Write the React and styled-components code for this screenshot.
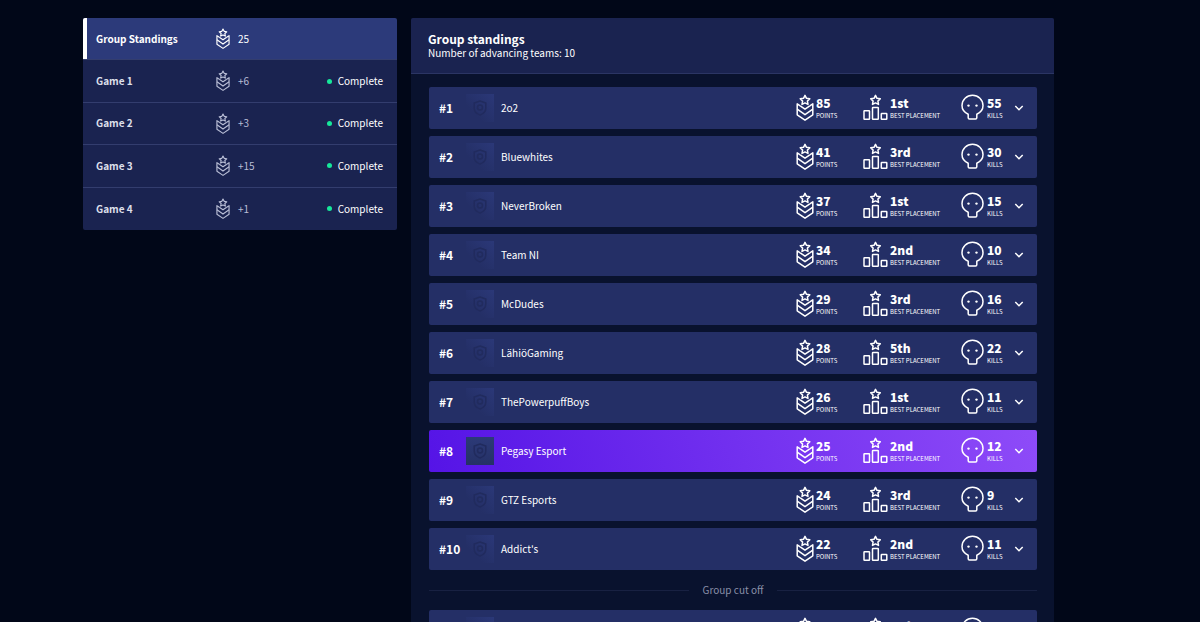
import React, { useState } from "react";
import styled, { createGlobalStyle, css } from "styled-components";

const games = [
  { name: "Group Standings", points: "25" },
  { name: "Game 1", points: "+6", status: "Complete" },
  { name: "Game 2", points: "+3", status: "Complete" },
  { name: "Game 3", points: "+15", status: "Complete" },
  { name: "Game 4", points: "+1", status: "Complete" },
];

const advancing = [
  { rank: 1, name: "2o2", points: 85, best: "1st", kills: 55 },
  { rank: 2, name: "Bluewhites", points: 41, best: "3rd", kills: 30 },
  { rank: 3, name: "NeverBroken", points: 37, best: "1st", kills: 15 },
  { rank: 4, name: "Team NI", points: 34, best: "2nd", kills: 10 },
  { rank: 5, name: "McDudes", points: 29, best: "3rd", kills: 16 },
  { rank: 6, name: "LähiöGaming", points: 28, best: "5th", kills: 22 },
  { rank: 7, name: "ThePowerpuffBoys", points: 26, best: "1st", kills: 11 },
  { rank: 8, name: "Pegasy Esport", points: 25, best: "2nd", kills: 12, own: true },
  { rank: 9, name: "GTZ Esports", points: 24, best: "3rd", kills: 9 },
  { rank: 10, name: "Addict's", points: 22, best: "2nd", kills: 11 },
];

const eliminated = [
  { rank: 11, name: "Nordavind", points: 18, best: "3rd", kills: 9 },
];

const RankIcon = ({ size }) => (
  <Icon viewBox="0 0 18 28" $width={size === "small" ? 14 : 18} aria-hidden="true">
    <path d="M9 1.3l1.5 3 3.3.5-2.4 2.3.6 3.3L9 8.900l-3 1.500.6-3.300-2.400-2.300 3.300-.5z" />
    <path d="M4.200 11.800L1.200 9.800v11L9 26.200l7.800-5.400v-11l-3 2" />
    <path d="M4.200 11.800L9 15.200l4.800-3.400M1.200 15.200L9 20.700l7.800-5.500" />
  </Icon>
);

const PodiumIcon = () => (
  <Icon viewBox="0 0 25 28" $width={25} aria-hidden="true">
    <path d="M12.500 1.300l1.500 3 3.300.5-2.400 2.300.6 3.300-3-1.500-3 1.500.6-3.300-2.400-2.300 3.300-.5z" />
    <rect x="1" y="16.800" width="5.500" height="8.400" rx=".5" />
    <rect x="9.500" y="13.500" width="5.800" height="11.700" rx=".5" />
    <rect x="18.300" y="19.500" width="5.500" height="5.700" rx=".5" />
  </Icon>
);

const SkullIcon = () => (
  <Icon viewBox="0 0 24 28" $width={24} aria-hidden="true">
    <path d="M7.200 20.200C3.400 18.600 1 15.400 1 11.600a10.500 10.300 0 0 1 21 0c0 3.800-2.400 7-6.200 8.600v3.600q0 1.200-1.200 1.200H8.400q-1.200 0-1.200-1.200z" />
    <circle cx="7.500" cy="11.600" r="1.200" fill="currentColor" stroke="none" />
    <circle cx="15.500" cy="11.600" r="1.200" fill="currentColor" stroke="none" />
  </Icon>
);

const TeamBadge = ({ own }) => (
  <Badge $own={own}>
    <svg width="16" height="16" viewBox="0 0 16 16" aria-hidden="true">
      <path d="M8 1l5.800 2v5c0 3.500-2.500 5.800-5.800 7-3.300-1.200-5.800-3.500-5.800-7V3z" />
      <circle cx="8" cy="7.500" r="2.500" />
    </svg>
  </Badge>
);

const TeamRow = ({ team }) => (
  <Row $own={team.own}>
    <Rank>#{team.rank}</Rank>
    <TeamBadge own={team.own} />
    <TeamName>{team.name}</TeamName>
    <Stat $width={67}>
      <RankIcon />
      <StatText>
        <strong>{team.points}</strong>
        <span>POINTS</span>
      </StatText>
    </Stat>
    <Stat $width={98}>
      <PodiumIcon />
      <StatText>
        <strong>{team.best}</strong>
        <span>BEST PLACEMENT</span>
      </StatText>
    </Stat>
    <Stat $width={53}>
      <SkullIcon />
      <StatText>
        <strong>{team.kills}</strong>
        <span>KILLS</span>
      </StatText>
    </Stat>
    <Toggle aria-label={`Show ${team.name}`}>
      <svg width="10" height="10" viewBox="0 0 10 10" aria-hidden="true">
        <path d="M1.300 3L5 6.700 8.700 3" />
      </svg>
    </Toggle>
  </Row>
);

export default function App() {
  const [selected, setSelected] = useState("Group Standings");

  return (
    <>
      <GlobalStyle />
      <Page>
        <GameNav>
          {games.map((game) => (
            <GameTab
              key={game.name}
              $active={game.name === selected}
              onClick={() => setSelected(game.name)}
            >
              <strong>{game.name}</strong>
              <GamePoints>
                <RankIcon size="small" />
                {game.points}
              </GamePoints>
              {game.status && <Status>{game.status}</Status>}
            </GameTab>
          ))}
        </GameNav>
        <Standings>
          <Header>
            <h1>Group standings</h1>
            <p>Number of advancing teams: 10</p>
          </Header>
          <Content>
            <TeamList>
              {advancing.map((team) => (
                <TeamRow key={team.rank} team={team} />
              ))}
            </TeamList>
            <CutOff>Group cut off</CutOff>
            <TeamList>
              {eliminated.map((team) => (
                <TeamRow key={team.rank} team={team} />
              ))}
            </TeamList>
          </Content>
        </Standings>
      </Page>
    </>
  );
}

const GlobalStyle = createGlobalStyle`
  * {
    box-sizing: border-box;
  }

  html {
    background: #010718;
    scrollbar-width: none;
  }

  body {
    margin: 0;
    color: #fff;
    font-family: "Noto Sans CJK SC", "Open Sans", sans-serif;
    font-size: 10px;
    line-height: 14px;
  }

  h1, p, ul {
    margin: 0;
    padding: 0;
  }

  button {
    border: 0;
    color: inherit;
    font: inherit;
    cursor: pointer;
  }
`;

const Page = styled.main`
  display: grid;
  grid-template-columns: 314fr 643fr;
  align-items: start;
  gap: 14px;
  padding: 18px 146px 18px 83px;
`;

const Icon = styled.svg`
  flex: none;
  width: ${({ $width }) => $width}px;
  fill: none;
  stroke: currentColor;
  stroke-width: 1.5;
  stroke-linejoin: round;
`;

const GameNav = styled.nav`
  display: grid;
  grid-auto-rows: 1fr;
  min-height: 212px;
  border-radius: 2px;
  overflow: hidden;
`;

const GameTab = styled.button`
  display: grid;
  grid-template-columns: 120px 1fr auto;
  align-items: center;
  padding: 0 14px 0 13px;
  background: #1a2350;
  border-bottom: 1px solid #333d6e;
  text-align: left;

  strong {
    color: #dcdfea;
  }

  &:last-child {
    border-bottom: 0;
  }

  ${({ $active }) =>
    $active &&
    css`
      background: #2c3a7a;
      box-shadow: inset 4px 0 #fff;

      strong,
      span {
        color: #fff;
      }
    `}
`;

const GamePoints = styled.span`
  display: flex;
  align-items: center;
  gap: 8px;
  color: #b8bdd5;
`;

const Status = styled.span`
  display: flex;
  align-items: center;
  gap: 6px;

  &::before {
    content: "";
    width: 5px;
    height: 5px;
    border-radius: 50%;
    background: #16e79a;
  }
`;

const Standings = styled.section`
  background: #09122e;
  border-radius: 2px;
  overflow: hidden;
`;

const Header = styled.header`
  height: 56px;
  padding: 13px 17px 0;
  background: #1a2350;
  border-bottom: 1px solid #2b3564;

  h1 {
    font-size: 12px;
    font-weight: 700;
    line-height: 15px;
  }
`;

const Content = styled.div`
  padding: 13px 17px 18px 18px;
`;

const TeamList = styled.ul`
  display: flex;
  flex-direction: column;
  gap: 7px;
  list-style: none;
`;

const Row = styled.li`
  display: flex;
  align-items: center;
  height: 42px;
  padding: 0 13px 0 10px;
  border-radius: 2px;
  background: ${({ $own }) =>
    $own ? "linear-gradient(70deg, #5514e6, #8e4bf8)" : "#242f66"};
`;

const Rank = styled.strong`
  width: 27px;
  font-size: 12px;
`;

const Badge = styled.span`
  display: grid;
  place-items: center;
  width: 28px;
  height: 28px;
  background: ${({ $own }) =>
    $own
      ? "linear-gradient(#2c3a78, #253166)"
      : "linear-gradient(45deg, #242f66 30%, #2b3878)"};

  svg {
    fill: none;
    stroke: #212b5e;
    stroke-width: 1.5;
  }
`;

const TeamName = styled.span`
  flex: 1;
  padding-left: 7px;
`;

const Stat = styled.div`
  display: flex;
  align-items: center;
  gap: 2px;
  width: ${({ $width }) => $width}px;
`;

const StatText = styled.div`
  display: flex;
  flex-direction: column;
  white-space: nowrap;

  strong {
    font-size: 12px;
    font-weight: 900;
    line-height: 16px;
  }

  span {
    font-size: 6px;
    line-height: 10px;
  }
`;

const Toggle = styled.button`
  display: grid;
  place-items: center;
  padding: 0;
  background: none;

  svg {
    fill: none;
    stroke: currentColor;
    stroke-width: 1.5;
  }
`;

const CutOff = styled.div`
  display: flex;
  align-items: center;
  gap: 14px;
  height: 40px;
  color: #8a90a8;

  &::before,
  &::after {
    content: "";
    flex: 1;
    height: 1px;
    background: #182142;
  }
`;
